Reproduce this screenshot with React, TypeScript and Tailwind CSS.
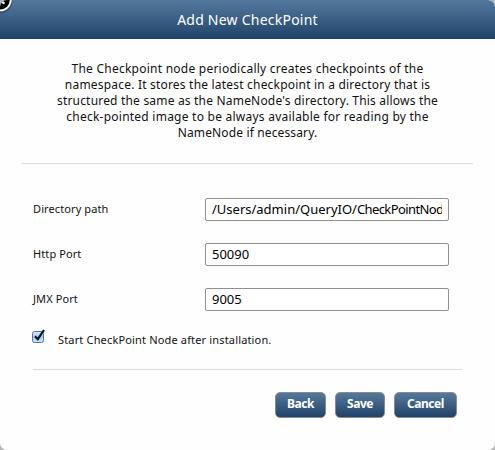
const lines = [
  { text: 'The Checkpoint node periodically creates checkpoints of the', cls: 'tracking-[0.24px]' },
  { text: 'namespace. It stores the latest checkpoint in a directory that is', cls: 'tracking-[0.2px]' },
  { text: "structured the same as the NameNode's directory. This allows the", cls: 'tracking-[0.19px]' },
  { text: 'check-pointed image to be always available for reading by the', cls: 'tracking-[0.24px]' },
  { text: 'NameNode if necessary.', cls: 'tracking-[0.14px]' },
];

const fields = [
  { label: 'Directory path', value: '/Users/admin/QueryIO/', tail: 'CheckPointNode' },
  { label: 'Http Port', value: '50090', tail: '' },
  { label: 'JMX Port', value: '9005', tail: '' },
];

function CloseBadge() {
  return (
    <svg className="absolute left-0 top-0" width="16" height="16" viewBox="0 0 16 16">
      <circle cx="0" cy="1" r="12.5" fill="#000" opacity="0.2" />
      <circle cx="0" cy="-0.3" r="11.6" fill="#fff" />
      <circle cx="0" cy="-0.3" r="9.8" fill="#000" />
      <path d="M-3 -3.5L3.6 3" stroke="#fff" strokeWidth="2.4" strokeLinecap="round" />
    </svg>
  );
}

function Checkbox() {
  return (
    <svg className="-mt-2 -ml-px h-[17px] w-[17px]" viewBox="0 0 17 17">
      <defs>
        <linearGradient id="box" x1="0" y1="0" x2="0" y2="1">
          <stop offset="0" stopColor="#d9ebfc" />
          <stop offset="0.5" stopColor="#a5cdf5" />
          <stop offset="1" stopColor="#c9ecff" />
        </linearGradient>
      </defs>
      <rect x="0.5" y="3.5" width="11" height="11" rx="2" fill="url(#box)" stroke="#5c6b9c" />
      <path d="M3 8.3L5.8 11.2L12 2" fill="none" stroke="#0b1524" strokeWidth="2.2" />
    </svg>
  );
}

function Button({ label, cls }: { label: string; cls: string }) {
  return (
    <button
      className={`h-[26px] rounded-[5px] border border-[#8a8a8a] bg-linear-to-b from-[#55799d] to-[#21436a] pb-[2px] text-[12px] leading-[22px] font-bold tracking-[-0.45px] text-white ${cls}`}
    >
      {label}
    </button>
  );
}

export default function App() {
  return (
    <div className="h-[450px] w-[495px] overflow-hidden bg-[#b5b5b5] font-['Noto_Sans',sans-serif] text-[#111]">
      <div className="relative flex h-full flex-col overflow-hidden rounded-[7px] bg-[#fefefe]">
        <header className="flex h-[39px] shrink-0 items-center justify-center bg-linear-to-b from-[#55799d] to-[#21436a] text-[14px] text-white">
          <span className="tracking-[0.23px] whitespace-nowrap">Add New CheckPoint</span>
        </header>
        <CloseBadge />
        <div className="mx-[22px] flex h-[125px] shrink-0 flex-col items-center border-b border-[#dcdcdc] pt-[22px] text-[12px] leading-4">
          {lines.map((l) => (
            <p key={l.text} className={`whitespace-nowrap ${l.cls}`}>{l.text}</p>
          ))}
        </div>
        <div className="ml-[33px] flex flex-col gap-[22px] pt-[34px]">
          {fields.map((f) => (
            <div key={f.label} className="flex h-[23px] items-center">
              <label className="w-[172px] text-[11px] tracking-[0.1px]">{f.label}</label>
              <div className="h-[23px] w-[244px] rounded-[2px] border border-[#909090] bg-white px-[6px]">
                <div className="overflow-hidden text-[13px] leading-[21px] whitespace-nowrap text-black">
                  {f.value}
                  <span className="tracking-[-0.6px]">{f.tail}</span>
                </div>
              </div>
            </div>
          ))}
        </div>
        <div className="mr-[33px] ml-[33px] flex h-[59px] items-center border-b border-[#dcdcdc]">
          <Checkbox />
          <span className="ml-[9px] text-[11px] tracking-[0.16px]">Start CheckPoint Node after installation.</span>
        </div>
        <div className="mr-[38px] flex justify-end gap-[9px] pt-[22px]">
          <Button label="Back" cls="w-[51px]" />
          <Button label="Save" cls="w-[50px]" />
          <Button label="Cancel" cls="w-[63px]" />
        </div>
      </div>
    </div>
  );
}
